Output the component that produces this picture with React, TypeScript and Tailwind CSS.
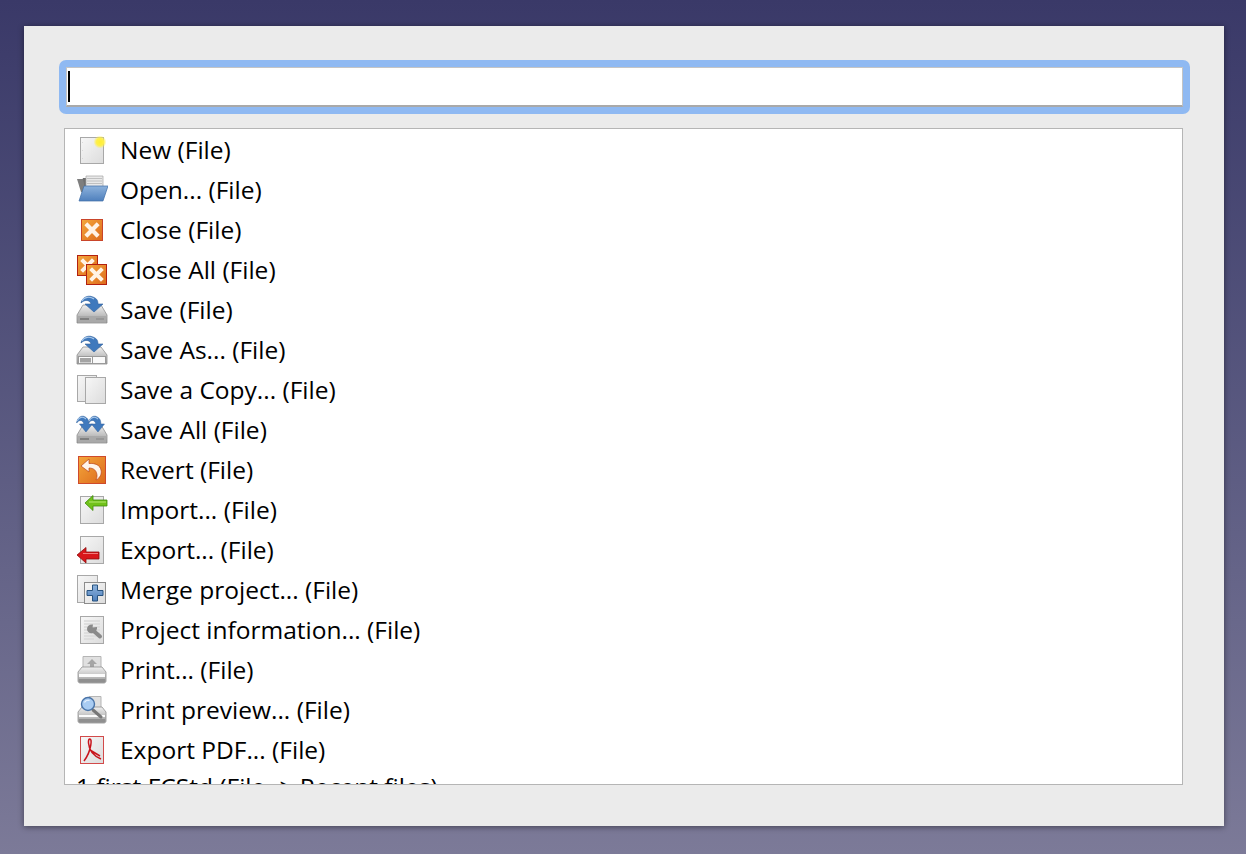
import React from "react";

const Defs = () => (
  <svg width="0" height="0" className="absolute">
    <defs>
      <linearGradient id="pg" x1="0" y1="0" x2="1" y2="1">
        <stop offset="0" stopColor="#f7f7f7" />
        <stop offset="1" stopColor="#dcdcdc" />
      </linearGradient>
      <linearGradient id="or" x1="0" y1="0" x2="1" y2="1">
        <stop offset="0" stopColor="#f4a73c" />
        <stop offset="1" stopColor="#dd6a1c" />
      </linearGradient>
      <linearGradient id="bl" x1="0" y1="0" x2="0" y2="1">
        <stop offset="0" stopColor="#8db2dc" />
        <stop offset="1" stopColor="#4f80bd" />
      </linearGradient>
      <linearGradient id="dr" x1="0" y1="0" x2="0" y2="1">
        <stop offset="0" stopColor="#f0f0f0" />
        <stop offset="1" stopColor="#9a9a9a" />
      </linearGradient>
      <radialGradient id="gl">
        <stop offset="0" stopColor="#ffee33" />
        <stop offset="0.55" stopColor="#fff04a" />
        <stop offset="1" stopColor="#fff04a" stopOpacity="0" />
      </radialGradient>
    </defs>
  </svg>
);

const Svg = ({ children }: { children: React.ReactNode }) => (
  <svg width="32" height="32" viewBox="0 0 32 32" className="shrink-0 blur-[0.3px]">
    {children}
  </svg>
);

const Page = ({ x = 4, y = 3, w = 24, h = 27, stroke = "#a8a8a8" }: { x?: number; y?: number; w?: number; h?: number; stroke?: string }) => (
  <rect x={x + 0.5} y={y + 0.5} width={w - 1} height={h - 1} fill="url(#pg)" stroke={stroke} />
);

const Drive = ({ y = 11, h = 18 }: { y?: number; h?: number }) => (
  <g>
    <path d={`M7 ${y}H25L31 ${y + h - 8}V${y + h}H1V${y + h - 8}Z`} fill="url(#dr)" stroke="#8f8f8f" strokeWidth="0.8" />
    <rect x="2" y={y + h - 7} width="28" height="6.5" fill="#a9a9a9" />
    <rect x="4" y={y + h - 5} width="9" height="2" fill="#7f7f7f" />
    <path d={`M21 ${y + h - 5}v2M23 ${y + h - 5}v2M25 ${y + h - 5}v2M27 ${y + h - 5}v2`} stroke="#858585" />
  </g>
);

const SaveArrow = ({ dx = 0, s = 1 }: { dx?: number; s?: number }) => (
  <g transform={`translate(${dx} 0) scale(${s} 1)`}>
    <path d="M5 9C6 3 13 0 19 4C21 5 22 7 22 10H27L18 18L9 10H15C14 6 9 5 5 9Z" fill="#3f79bd" stroke="#2f5f9c" strokeWidth="0.6" />
    <path d="M6 7C8 3 14 2 18 5" stroke="#a9c8ea" strokeWidth="1.2" fill="none" />
  </g>
);

const XBox = ({ x, y, s, stroke = "#c9452a" }: { x: number; y: number; s: number; stroke?: string }) => (
  <g>
    <rect x={x + 0.5} y={y + 0.5} width={s - 1} height={s - 1} fill="url(#or)" stroke={stroke} />
    <path d={`M${x + s * 0.22} ${y + s * 0.22}L${x + s * 0.78} ${y + s * 0.78}M${x + s * 0.78} ${y + s * 0.22}L${x + s * 0.22} ${y + s * 0.78}`} stroke="#fff3e6" strokeWidth={s * 0.19} />
  </g>
);

const icons: Record<string, React.ReactNode> = {
  new: (
    <Svg>
      <Page />
      <path d="M6.5 8v.5M6.5 16v.5M6.5 24v.5" stroke="#c0c0c0" />
      <circle cx="24" cy="8" r="6.5" fill="url(#gl)" />
    </Svg>
  ),
  open: (
    <Svg>
      <path d="M7 4H12L13 6H25V12H4Z" fill="#6f6f6f" />
      <path d="M5 18L1 5H7L10 20Z" fill="#7e7e7e" />
      <path d="M10 2H27V14H10Z" fill="#e9e9e9" stroke="#a5a5a5" strokeWidth="0.7" />
      <path d="M11 4.500H26M11 7H26M11 9.500H26" stroke="#b5b5b5" strokeWidth="0.8" />
      <path d="M8 12H32L27 27H3Z" fill="url(#bl)" stroke="#3f6ea8" strokeWidth="0.7" />
    </Svg>
  ),
  close: (
    <Svg>
      <XBox x={5} y={5} s={22} />
    </Svg>
  ),
  closeAll: (
    <Svg>
      <XBox x={1} y={1} s={21} stroke="#b3200f" />
      <XBox x={10} y={10} s={21} stroke="#b3200f" />
    </Svg>
  ),
  save: (
    <Svg>
      <Drive />
      <SaveArrow />
    </Svg>
  ),
  saveAs: (
    <Svg>
      <path d="M7 13H25L31 21V30H1V21Z" fill="url(#dr)" stroke="#8f8f8f" strokeWidth="0.8" />
      <rect x="2.500" y="22.500" width="27" height="7" fill="#fafafa" stroke="#9a9a9a" />
      <rect x="4" y="24" width="11" height="4.500" fill="#a4a4a4" />
      <path d="M16.500 23v6" stroke="#9a9a9a" />
      <SaveArrow />
    </Svg>
  ),
  saveCopy: (
    <Svg>
      <Page x={1} y={1} w={20} h={27} />
      <Page x={9} y={3} w={21} h={27} />
    </Svg>
  ),
  saveAll: (
    <Svg>
      <Drive />
      <SaveArrow dx={-3} s={0.72} />
      <SaveArrow dx={9} s={0.72} />
    </Svg>
  ),
  revert: (
    <Svg>
      <rect x="2.500" y="2.500" width="27" height="27" fill="url(#or)" stroke="#cf4a2c" />
      <path d="M13 5L5 12L13 18V14C18 14 21 17 21 22C21 24 20 25 20 26C24 24 26 20 25 16C24 11 19 9 13 9.500Z" fill="#fff6ec" stroke="#b9431a" strokeWidth="0.7" />
    </Svg>
  ),
  import: (
    <Svg>
      <Page x={4} y={2} w={24} h={28} />
      <path d="M9 9L17 1.500V6H31V12H17V16.500Z" fill="#71c21a" stroke="#3f8c0c" strokeWidth="0.8" />
      <path d="M13 8H30" stroke="#b6ea70" strokeWidth="1" />
    </Svg>
  ),
  export: (
    <Svg>
      <Page x={4} y={2} w={24} h={28} />
      <path d="M1 21L10 13.500V18H23V25H10V29Z" fill="#d8161a" stroke="#8c0e0e" strokeWidth="0.8" />
      <path d="M7 19.500H22" stroke="#f27a7a" strokeWidth="1" />
    </Svg>
  ),
  merge: (
    <Svg>
      <Page x={1} y={1} w={21} h={28} />
      <Page x={8} y={8} w={22} h={22} stroke="#8c8c8c" />
      <path d="M16.500 11H21.500V16.500H27V21.500H21.500V27H16.500V21.500H11V16.500H16.500Z" fill="url(#bl)" stroke="#26527f" strokeWidth="1" />
    </Svg>
  ),
  info: (
    <Svg>
      <Page x={4} y={2} w={24} h={28} />
      <path d="M8 7H24M8 10H24M8 13H24M8 16H24M8 19H24M8 22H24M8 25H18" stroke="#d9d9d9" strokeWidth="1.500" />
      <path d="M16 15.500L24 22.500" stroke="#8a8a8a" strokeWidth="4" strokeLinecap="round" />
      <path d="M17 10.500C13.500 10 11 12 11 15C11 18 14 20 17 19C20 18 21.500 15.500 21 13L16.500 13.500Z" fill="#8a8a8a" />
    </Svg>
  ),
  print: (
    <Svg>
      <path d="M7 2.500H25V15H7Z" fill="#e0e0e0" stroke="#b5b5b5" />
      <path d="M16 5L21 10H18V14H14V10H11Z" fill="#a6a6a6" />
      <path d="M6 13H26L30 18V27C30 28 29 29 28 29H4C3 29 2 28 2 27V18Z" fill="url(#dr)" stroke="#8f8f8f" strokeWidth="0.8" />
      <rect x="3" y="20" width="26" height="3" fill="#fbfbfb" />
      <rect x="3" y="25" width="26" height="3" fill="#8f8f8f" />
    </Svg>
  ),
  preview: (
    <Svg>
      <path d="M13 2.500H25V15H13Z" fill="#e0e0e0" stroke="#b5b5b5" />
      <path d="M6 13H26L30 18V27C30 28 29 29 28 29H4C3 29 2 28 2 27V18Z" fill="url(#dr)" stroke="#8f8f8f" strokeWidth="0.8" />
      <rect x="3" y="21" width="26" height="2" fill="#fbfbfb" />
      <rect x="3" y="25" width="26" height="3" fill="#8f8f8f" />
      <path d="M17 16L25 23" stroke="#777" strokeWidth="3" strokeLinecap="round" />
      <circle cx="12" cy="10" r="6.500" fill="#a9ccf2" stroke="#4a74a8" strokeWidth="1.400" />
      <path d="M8.500 8.500C9.500 6.500 12 6 13.500 6.500" stroke="#eaf3fd" strokeWidth="1.200" fill="none" />
    </Svg>
  ),
  pdf: (
    <Svg>
      <rect x="4.500" y="2.500" width="23" height="27" fill="url(#pg)" stroke="#d24a4a" />
      <path d="M25 25C18 22 13 16 12.500 9C12.300 6 13 5 13.800 5C15 5 15.500 7 14.800 11C14 16 11 23 8 27M14 16L24 22" stroke="#c8141c" strokeWidth="1.500" fill="none" />
    </Svg>
  ),
};

const rows: [string, string][] = [
  ["new", "New (File)"],
  ["open", "Open... (File)"],
  ["close", "Close (File)"],
  ["closeAll", "Close All (File)"],
  ["save", "Save (File)"],
  ["saveAs", "Save As... (File)"],
  ["saveCopy", "Save a Copy... (File)"],
  ["saveAll", "Save All (File)"],
  ["revert", "Revert (File)"],
  ["import", "Import... (File)"],
  ["export", "Export... (File)"],
  ["merge", "Merge project... (File)"],
  ["info", "Project information... (File)"],
  ["print", "Print... (File)"],
  ["preview", "Print preview... (File)"],
  ["pdf", "Export PDF... (File)"],
];

export default function App() {
  return (
    <div className="h-[854px] w-full overflow-hidden bg-gradient-to-b from-[#3a3968] to-[#7c7a98] pl-[24px] pt-[26px] font-['Open_Sans','Liberation_Sans',sans-serif] text-black">
      <Defs />
      <div className="flex h-[800px] w-[1200px] flex-col bg-[#ebebeb] pl-[35px] pr-[34px] pt-[34px] shadow-[0_1px_6px_rgba(0,0,0,0.45)]">
        <div className="h-[54px] shrink-0 rounded-[7px] bg-[#8fb9f2] p-[7px]">
          <div className="flex h-[40px] items-center border border-b-2 border-[#a9a9a9] border-x-[#c4c4c4] border-t-[#c4c4c4] bg-white pl-px">
            <div className="h-[31px] w-[2px] bg-black" />
          </div>
        </div>
        <div className="ml-[5px] mr-[7px] mt-[14px] h-[657px] overflow-hidden border border-[#b5b5b5] bg-white pt-px">
          {rows.map(([icon, label]) => (
            <div key={label} className="flex h-[40px] items-center gap-[12px] pl-[11px] text-[24.5px] leading-[40px]">
              {icons[icon]}
              <span className="whitespace-nowrap">{label}</span>
            </div>
          ))}
          <div className="flex h-[34px] items-center pl-[11px] text-[24.5px] leading-[34px]">
            <span className="whitespace-nowrap">1 first.FCStd (File -&gt; Recent files)</span>
          </div>
        </div>
      </div>
    </div>
  );
}
